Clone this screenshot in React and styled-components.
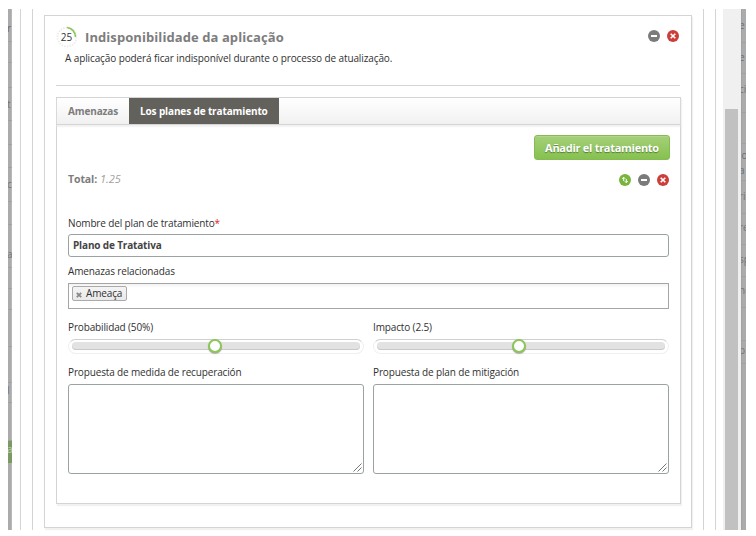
import React from "react";
import styled, { createGlobalStyle, css } from "styled-components";

const GlobalStyle = createGlobalStyle`
  * { box-sizing: border-box; }
  body {
    margin: 0;
    background: #fff;
    color: #303030;
    font: 10px/14px "Open Sans", "Noto Sans", sans-serif;
  }
`;

const Page = styled.div`
  width: 756px;
  height: 536px;
  padding: 9px 10px 6px 8px;
  overflow: hidden;
`;

const Window = styled.div`
  display: grid;
  grid-template-columns: 4px 711px 18px 5px;
  width: 738px;
  height: 521px;
`;

const Strip = styled.div`
  overflow: hidden;
  background: #ababab;
  box-shadow: ${(p) => (p.$right ? "inset 1px 0 #a2a2a2" : "inset -1px 0 #b8b8b8")};
`;

const StripRow = styled.div`
  display: flex;
  align-items: flex-start;
  height: ${(p) => p.$h}px;
  padding-top: ${(p) => p.$top || 0}px;
  border-bottom: 1px solid ${(p) => (p.$green ? "#7b9a63" : "#a0a0a0")};
  background: ${(p) => (p.$green ? "#7b9a63" : "transparent")};
  color: ${(p) => p.$color || "#747474"};
  line-height: 15px;
  white-space: pre;
  span { margin-left: ${(p) => (p.$right ? -2 : -1)}px; }
`;

const Modal = styled.div`
  padding: 0 7px 0 8px;
  background: #fff;
`;

const Outer = styled.div`
  height: 521px;
  border: solid #d4d4d4;
  border-width: 0 1px;
  padding: 0 11px;
`;

const Inner = styled.div`
  height: 521px;
  border: solid #d4d4d4;
  border-width: 0 1px;
  padding: 6px 11px 0;
`;

const Risk = styled.section`
  height: 513px;
  border: 1px solid #d4d4d4;
  box-shadow: 1px 2px 1px #f1f1f1;
  padding: 0 10px 0 11px;
`;

const RiskHeader = styled.header`
  width: 624px;
  height: 70px;
  padding-top: 9px;
  border-bottom: 1px solid #d4d4d4;
`;

const TitleRow = styled.div`
  display: flex;
  align-items: center;
  height: 24px;
`;

const Gauge = styled.svg`
  width: 22px;
  height: 22px;
  margin-right: 7px;
  flex: none;
`;

const Title = styled.h1`
  flex: 1;
  margin: 0;
  font-size: 13px;
  line-height: 20px;
  letter-spacing: 0.08px;
  color: #7d7d7d;
  white-space: nowrap;
`;

const Actions = styled.div`
  display: flex;
  gap: 7px;
  padding-right: ${(p) => p.$pad}px;
  margin-top: ${(p) => (p.$raised ? -2 : 0)}px;
  svg { width: 12px; height: 12px; display: block; }
`;

const Description = styled.p`
  margin: 2px 0 0 9px;
  letter-spacing: -0.11px;
`;

const TabPanel = styled.div`
  height: 407px;
  width: 625px;
  margin-top: 11px;
  border: 1px solid #d4d4d4;
  box-shadow: 1px 2px 1px #f1f1f1;
`;

const TabBar = styled.div`
  display: flex;
  height: 27px;
  border-bottom: 1px solid #d4d4d4;
  background: linear-gradient(#fff, #f1f1f1);
  box-shadow: 0 2px 1px #f3f3f3;
`;

const Tab = styled.div`
  padding: 0 11px;
  font-weight: bold;
  line-height: 26px;
  letter-spacing: -0.13px;
  white-space: nowrap;
  width: 72px;
  color: #7d7d7d;
  ${(p) =>
    p.$active &&
    css`
      width: 150px;
      background: #63615b;
      color: #fff;
    `}
`;

const Content = styled.div`
  padding: 10px 11px 0;
`;

const AddButton = styled.button`
  display: block;
  width: 136px;
  height: 25px;
  margin: 0 -1px 0 auto;
  padding: 0;
  border: 1px solid #85bb52;
  border-radius: 3px;
  background: linear-gradient(#a5d079, #86c14f);
  box-shadow: inset 0 1px #b0d68b;
  color: #fff;
  font: bold 11px/21px "Open Sans", "Noto Sans", sans-serif;
  letter-spacing: -0.28px;
  text-shadow: 0 1px 1px #567c36;
  white-space: nowrap;
`;

const TotalRow = styled.div`
  display: flex;
  align-items: center;
  justify-content: space-between;
  height: 14px;
  margin: 13px 0 29px;
`;

const Total = styled.div`
  margin-top: -2px;
  color: #a0a0a0;
  font-size: 11px;
  font-style: italic;
  b {
    font-style: normal;
    font-size: 10.5px;
    letter-spacing: -0.1px;
    color: #7d7d7d;
  }
`;

const Label = styled.label`
  display: block;
  height: 14px;
  letter-spacing: -0.14px;
  white-space: nowrap;
  span { color: #e02020; }
`;

const Input = styled.div`
  height: 23px;
  margin: 4px 0 7px;
  width: 601px;
  padding-left: 4px;
  border: 1px solid #9aa3a0;
  border-radius: 3px;
  font-weight: bold;
  line-height: 21px;
  letter-spacing: -0.16px;
  color: #444;
`;

const TagBox = styled.div`
  height: 26px;
  width: 601px;
  margin: 5px 0 11px;
  padding: 2px 3px;
  border: 1px solid #a5a5a5;
  background: linear-gradient(#f2f2f2, #fff 4px);
`;

const Tag = styled.div`
  display: flex;
  align-items: center;
  width: 55px;
  height: 15px;
  padding-left: 3px;
  gap: 4px;
  border: 1px solid #aaa;
  border-radius: 2px;
  background: linear-gradient(#f4f4f4, #e9e9e9);
  line-height: 13px;
  letter-spacing: -0.15px;
  svg { width: 6px; height: 6px; margin-top: 3px; flex: none; }
`;

const Columns = styled.div`
  display: grid;
  grid-template-columns: 296px 296px;
  column-gap: 9px;
`;

const Slider = styled.div`
  position: relative;
  height: 15px;
  margin: 5px 0 11px;
  padding: 3px;
  border-radius: 8px;
  border: 1px solid #f0f0f0;
  border-top-color: #d0d0d0;
  &::before {
    content: "";
    display: block;
    height: 8px;
    margin-top: -1px;
    border-radius: 4px;
    background: #e2e2e2;
    box-shadow: inset 0 -1px #c8c8c8;
  }
`;

const Knob = styled.div`
  position: absolute;
  top: -1px;
  left: ${(p) => p.$left}px;
  width: 14px;
  height: 14px;
  border: 2px solid #8cc656;
  border-radius: 50%;
  background: #fff;
  box-shadow: 0 1px 1px #aaa;
`;

const TextArea = styled.div`
  display: flex;
  align-items: flex-end;
  justify-content: flex-end;
  height: 90px;
  margin-top: 5px;
  padding: 1px;
  border: 1px solid #9aa3a0;
  border-radius: 3px;
  svg { width: 9px; height: 9px; }
`;

const Scrollbar = styled.div`
  padding: 100px 3px 0 2px;
  background: #f0f0f0;
`;

const Thumb = styled.div`
  height: 421px;
  background: #c1c1c1;
`;

const leftRows = [
  { h: 33, text: "r", top: 12, color: "#6d6a68" },
  { h: 21 }, { h: 25 },
  { h: 33, text: "t", top: 9 },
  { h: 24 }, { h: 23 },
  { h: 34, text: "c", top: 9 },
  { h: 23 },
  { h: 43, text: "a", top: 22 },
  { h: 21 }, { h: 21 }, { h: 37 }, { h: 36 },
  { h: 20, text: "l", color: "#6f6f9c" },
  { h: 38 },
  { h: 22, text: "a", top: 1, color: "#c2cfba", green: true },
];

const rightRows = [
  { h: 34, text: "e", top: 9, color: "#65717d" },
  { h: 31, text: "e", top: 7, color: "#65717d" },
  { h: 39, text: "ci", top: 8 },
  { h: 31 },
  { h: 37, text: "lo\na", top: 4, color: "#65717d" },
  { h: 33, text: "ri", top: 8 },
  { h: 31, text: "re", top: 6 },
  { h: 32, text: "sp", top: 7 },
  { h: 31, text: "ne", top: 6 },
  { h: 33 },
  { h: 23, text: "p", top: 2 },
];

const Resize = () => (
  <svg viewBox="0 0 9 9" stroke="#666" strokeWidth="0.9">
    <path d="M0.5 8.5 8.5 0.5M4.5 8.5 8.5 4.5" />
  </svg>
);

const MinusIcon = () => (
  <svg viewBox="0 0 12 12">
    <circle cx="6" cy="6" r="6" fill="#7b7b7b" />
    <rect x="3" y="5" width="6" height="2" fill="#fff" />
  </svg>
);

const CloseIcon = () => (
  <svg viewBox="0 0 12 12">
    <circle cx="6" cy="6" r="6" fill="#cb3f3b" />
    <path d="M3.7 3.7 8.3 8.3M8.3 3.7 3.7 8.3" stroke="#fff" strokeWidth="1.6" />
  </svg>
);

const SwapIcon = () => (
  <svg viewBox="0 0 12 12">
    <circle cx="6" cy="6" r="6" fill="#79b43c" />
    <path d="M4.7 7V3.5M3.2 4.8 4.7 3.2 6.2 4.8M7.3 5V8.5M5.8 7.2 7.3 8.8 8.8 7.2" fill="none" stroke="#fff" strokeWidth="1" />
  </svg>
);

const SideStrip = ({ rows, right }) => (
  <Strip $right={right}>
    {rows.map(({ h, text, top, color, green }, i) => (
      <StripRow key={i} $h={h} $top={top} $color={color} $green={green} $right={right}>
        {text && <span>{text}</span>}
      </StripRow>
    ))}
  </Strip>
);

export default function App() {
  return (
    <Page>
      <GlobalStyle />
      <Window>
        <SideStrip rows={leftRows} />
        <Modal>
          <Outer>
            <Inner>
              <Risk>
                <RiskHeader>
                  <TitleRow>
                    <Gauge viewBox="0 0 22 22">
                      <circle cx="11" cy="11" r="9.5" fill="none" stroke="#ebebeb" strokeWidth="1.8" strokeDasharray="1.5 1.2" />
                      <path d="M11 1.5A9.5 9.5 0 0 1 19.5 11" fill="none" stroke="#8cc656" strokeWidth="1.6" />
                      <text x="10.5" y="15" textAnchor="middle" fontSize="10" fill="#303030">25</text>
                    </Gauge>
                    <Title>Indisponibilidade da aplicação</Title>
                    <Actions $pad={1} $raised><MinusIcon /><CloseIcon /></Actions>
                  </TitleRow>
                  <Description>A aplicação poderá ficar indisponível durante o processo de atualização.</Description>
                </RiskHeader>
                <TabPanel>
                  <TabBar>
                    <Tab>Amenazas</Tab>
                    <Tab $active>Los planes de tratamiento</Tab>
                  </TabBar>
                  <Content>
                    <AddButton>Añadir el tratamiento</AddButton>
                    <TotalRow>
                      <Total><b>Total:</b> 1.25</Total>
                      <Actions $pad={0}><SwapIcon /><MinusIcon /><CloseIcon /></Actions>
                    </TotalRow>
                    <Label>Nombre del plan de tratamiento<span>*</span></Label>
                    <Input>Plano de Tratativa</Input>
                    <Label>Amenazas relacionadas</Label>
                    <TagBox>
                      <Tag>
                        <svg viewBox="0 0 6 6"><path d="M.8.8 5.2 5.2M5.2.8.8 5.2" stroke="#888" strokeWidth="1.8" /></svg>
                        Ameaça
                      </Tag>
                    </TagBox>
                    <Columns>
                      <div>
                        <Label>Probabilidad (50%)</Label>
                        <Slider><Knob $left={139} /></Slider>
                        <Label>Propuesta de medida de recuperación</Label>
                        <TextArea><Resize /></TextArea>
                      </div>
                      <div>
                        <Label>Impacto (2.5)</Label>
                        <Slider><Knob $left={138} /></Slider>
                        <Label>Propuesta de plan de mitigación</Label>
                        <TextArea><Resize /></TextArea>
                      </div>
                    </Columns>
                  </Content>
                </TabPanel>
              </Risk>
            </Inner>
          </Outer>
        </Modal>
        <Scrollbar><Thumb /></Scrollbar>
        <SideStrip rows={rightRows} right />
      </Window>
    </Page>
  );
}
